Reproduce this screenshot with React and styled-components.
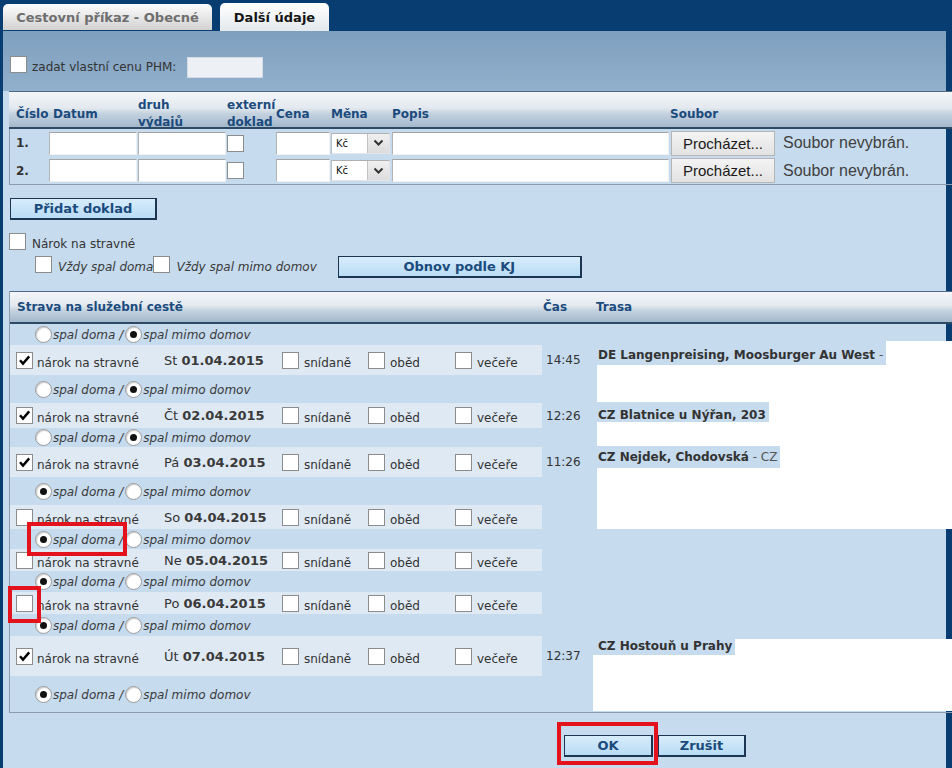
import React from 'react';
import styled, { createGlobalStyle } from 'styled-components';

const GlobalStyle = createGlobalStyle`
  html, body { margin: 0; padding: 0; background: #073d70; }
  body {
    font-family: "DejaVu Sans", Verdana, sans-serif;
    font-size: 12px;
    color: #333;
  }
`;

const DOC_COLS = '39px 89px 89px 49px 55px 61px 279px 1fr';
const MEAL_COLS = '532px 55px 1fr';

const Page = styled.div`
  width: 952px;
  height: 768px;
  overflow: hidden;
  background: #073d70;
  display: flex;
  flex-direction: column;
`;

const TabBar = styled.div`
  display: flex;
  align-items: flex-end;
  gap: 8px;
  height: 31px;
  padding-left: 3px;
  box-sizing: border-box;
  flex: none;
`;

const Tab = styled.div`
  box-sizing: border-box;
  width: ${p => p.$w}px;
  height: ${p => (p.$active ? 28 : 26)}px;
  margin-bottom: ${p => (p.$active ? 0 : 1)}px;
  border-radius: 5px 5px 0 0;
  display: flex;
  align-items: center;
  justify-content: center;
  font-weight: bold;
  font-size: 13px;
  color: ${p => (p.$active ? '#151515' : '#6e6e6e')};
  background: ${p =>
    p.$active
      ? 'linear-gradient(#ffffff, #e4e9ed)'
      : 'linear-gradient(#fdfdfd, #d2d2d2)'};
`;

const Panel = styled.div`
  width: 943px;
  margin-left: 3px;
  flex: 1;
  background: #c6dbee;
  display: flex;
  flex-direction: column;
`;

const TopArea = styled.div`
  height: 60px;
  box-sizing: border-box;
  padding: 25px 0 0 7px;
  background: linear-gradient(#7e9fbe, #91b0cc);
  display: flex;
  align-items: flex-start;
`;

const Label = styled.span`
  line-height: 13px;
  margin-bottom: -1px;
  white-space: nowrap;
  font-style: ${p => (p.$italic ? 'italic' : 'normal')};
  color: ${p => (p.$italic ? '#3a3a3a' : '#333')};
`;

const CheckLabel = styled.span`
  display: inline-flex;
  align-items: flex-end;
  gap: ${p => p.$gap ?? 5}px;
`;

const PhmInput = styled.span`
  width: 76px;
  height: 21px;
  margin: 1px 0 0 11px;
  box-sizing: border-box;
  background: #edf1f5;
  border: 1px solid #d3dce5;
`;

const Box = styled.span`
  box-sizing: border-box;
  width: 17px;
  height: 17px;
  flex: none;
  background: #fff;
  border: 1px solid #8c8c8c;
  display: inline-flex;
  align-items: center;
  justify-content: center;
`;

const RadioDot = styled.span`
  box-sizing: border-box;
  width: 17px;
  height: 17px;
  flex: none;
  border-radius: 50%;
  background: #fff;
  border: 1px solid #9a9a9a;
  box-shadow: inset 1px 1px 1px rgba(0, 0, 0, 0.2);
  display: inline-flex;
  align-items: center;
  justify-content: center;
  &::after {
    content: '';
    width: 7px;
    height: 7px;
    border-radius: 50%;
    background: ${p => (p.$on ? '#111' : 'transparent')};
  }
`;

const Marked = styled.span`
  position: relative;
  display: inline-flex;
  align-items: flex-end;
  &::after {
    content: '';
    position: absolute;
    z-index: 2;
    top: ${p => p.$t}px;
    right: ${p => p.$r}px;
    bottom: ${p => p.$b}px;
    left: ${p => p.$l}px;
    border: 4px solid #e3121c;
    pointer-events: none;
  }
`;

const Check = ({ on }) => (
  <Box>
    {on && (
      <svg width="13" height="13" viewBox="0 0 13 13">
        <path d="M2 6.3 L5 9.6 L11.2 2.4" fill="none" stroke="#000" strokeWidth="2.4" />
      </svg>
    )}
  </Box>
);

/* tabulka dokladu */

const DocTable = styled.div`
  margin: 0 -6px 0 6px;
`;

const HeadRow = styled.div`
  box-sizing: border-box;
  display: grid;
  grid-template-columns: ${p => p.$cols};
  height: ${p => p.$h}px;
  padding: ${p => p.$pt ?? 0}px 0 0 1px;
  align-items: center;
  border-top: 1px solid #4d6985;
  border-bottom: 2px solid #2e4964;
  background: linear-gradient(#f4f6f9 0%, #e3e9ef 45%, #c4d2df 62%, #a3b8cc 100%);
`;

const HeadCell = styled.div`
  font-weight: bold;
  color: #1b4b7d;
  line-height: 17px;
  padding-left: ${p => p.$pad ?? 0}px;
  margin-left: ${p => p.$shift ?? 0}px;
  white-space: nowrap;
`;

const DocRows = styled.div`
  border-left: 1px solid #8c9bab;
  border-bottom: 1px solid #8c9bab;
`;

const DocRow = styled.div`
  display: grid;
  grid-template-columns: ${DOC_COLS};
  height: ${p => p.$h}px;
  align-items: center;
`;

const RowNo = styled.div`
  font-weight: bold;
  padding-left: 6px;
  color: #333;
`;

const TextInput = styled.span`
  display: block;
  width: ${p => p.$w}px;
  height: 23px;
  box-sizing: border-box;
  background: #fff;
  border: 1px solid;
  border-color: #a4a4a4 #f0f0f0 #f0f0f0 #b4b4b4;
`;

const Select = styled.span`
  width: 59px;
  height: 21px;
  box-sizing: border-box;
  background: #fff;
  border: 1px solid;
  border-color: #b0b0b0 #e6e6e6 #e6e6e6 #bcbcbc;
  display: flex;
  align-items: center;
  justify-content: space-between;
  padding-left: 4px;
  font-size: 10px;
  color: #111;
`;

const DropBtn = styled.span`
  width: 22px;
  height: 19px;
  box-sizing: border-box;
  background: linear-gradient(#f0f0f0, #dcdcdc);
  border-left: 1px solid #c2c2c2;
  display: flex;
  align-items: center;
  justify-content: center;
`;

const FileCell = styled.div`
  display: flex;
  align-items: center;
`;

const Browse = styled.span`
  width: 104px;
  height: 25px;
  box-sizing: border-box;
  background: linear-gradient(#f4f4f4, #e2e2e2);
  border: 1px solid #b5b5b5;
  display: flex;
  align-items: center;
  justify-content: center;
  font-family: "Liberation Sans", Arial, sans-serif;
  font-size: 15px;
  color: #1a1a1a;
`;

const FileText = styled.span`
  margin-left: 8px;
  font-family: "Liberation Sans", Arial, sans-serif;
  font-size: 16px;
  color: #404040;
  white-space: nowrap;
`;

const BlueButton = styled.span`
  box-sizing: border-box;
  width: ${p => p.$w}px;
  height: 22px;
  display: flex;
  align-items: center;
  justify-content: center;
  border: 1px solid #1c3550;
  border-right-width: 2px;
  border-bottom-width: 2px;
  background: linear-gradient(#d7ecfb, #b9dcf5);
  font-weight: bold;
  font-size: 13px;
  color: #1b4b7d;
`;

const AddRow = styled.div`
  margin: 13px 0 0 7px;
  display: flex;
`;

const NarokRow = styled.div`
  margin-top: 12px;
  height: 18px;
  padding-left: 6px;
  display: flex;
  align-items: flex-end;
`;

const SpalRow = styled.div`
  margin-top: 6px;
  height: 22px;
  padding-left: 32px;
  display: flex;
  align-items: flex-start;
`;

const SpalOpts = styled.span`
  display: inline-flex;
  align-items: flex-end;
  height: 17px;
  margin-right: 21px;
`;

/* strava */

const MealTable = styled.div`
  margin: 13px -6px 0 6px;
  border-left: 1px solid #8c9bab;
  border-bottom: 1px solid #8c9bab;
`;

const RadioLine = styled.div`
  height: ${p => p.$h}px;
  padding-left: 25px;
  display: flex;
  align-items: center;
  grid-row: 2;
  grid-column: 1 / span 2;
`;

const RadioPair = styled.span`
  display: inline-flex;
  align-items: flex-end;
`;

const RadioText = styled.span`
  font-style: italic;
  color: #3a3a3a;
  line-height: 13px;
  margin: 0 ${p => p.$mr ?? 0}px 1px 1px;
  white-space: nowrap;
`;

const DayGrid = styled.div`
  display: grid;
  grid-template-columns: ${MEAL_COLS};
  grid-template-rows: ${p => p.$meal}px ${p => p.$radio}px;
`;

const MealBand = styled.div`
  grid-row: 1;
  grid-column: 1;
  background: #dfe9f3;
  display: grid;
  grid-template-columns: 150px 118px 86px 87px 1fr;
  align-items: center;
`;

const BandCell = styled.div`
  padding-left: ${p => p.$pad}px;
  display: flex;
  align-items: center;
  white-space: nowrap;
`;

const DateText = styled.span`
  font-size: 13px;
  color: #333;
  b { color: #3a3a3a; }
`;

const TimeCell = styled.div`
  grid-row: 1;
  grid-column: 2;
  padding-left: 4px;
  display: flex;
  align-items: center;
  color: #333;
`;

const TrasaCell = styled.div`
  grid-row: 1 / span 2;
  grid-column: 3;
  align-self: start;
  margin-top: ${p => p.$top}px;
  margin-left: ${p => -p.$shift}px;
  height: ${p => p.$h}px;
  background: #fff;
`;

const TrasaLine = styled.span`
  display: inline-block;
  background: #c6dbee;
  line-height: 14px;
  padding: ${p => p.$pt}px 3px ${p => p.$pb}px ${p => 1 + p.$shift}px;
  font-weight: bold;
  color: #333;
  white-space: nowrap;
  span { font-weight: normal; color: #555; }
`;

const Footer = styled.div`
  padding: 22px 0 0 561px;
  display: flex;
  gap: 5px;
`;

const days = [
  { dow: 'St', date: '01.04.2015', on: true, time: '14:45', meal: 30, radio: 28, home: false,
    trasa: { bold: 'DE Langenpreising, Moosburger Au West', rest: ' -', top: -4, h: 61, pt: 7, pb: 3, shift: 0 } },
  { dow: 'Čt', date: '02.04.2015', on: true, time: '12:26', meal: 25, radio: 19, home: false,
    trasa: { bold: 'CZ Blatnice u Nýřan, 203', top: -1, h: 45, pt: 6, pb: 0, shift: 0 } },
  { dow: 'Pá', date: '03.04.2015', on: true, time: '11:26', meal: 30, radio: 28, home: true,
    trasa: { bold: 'CZ Nejdek, Chodovská', rest: ' - CZ', top: -1, h: 83, pt: 4, pb: 4, shift: 0 } },
  { dow: 'So', date: '04.04.2015', on: false, meal: 24, radio: 20, home: true, markRadio: true },
  { dow: 'Ne', date: '05.04.2015', on: false, meal: 22, radio: 21, home: true },
  { dow: 'Po', date: '06.04.2015', on: false, meal: 22, radio: 22, home: true, markCheck: true },
  { dow: 'Út', date: '07.04.2015', on: true, time: '12:37', meal: 40, radio: 36, home: true,
    trasa: { bold: 'CZ Hostouň u Prahy', top: 3, h: 72, pt: 0, pb: 2, shift: 4 } },
];

const Chevron = () => (
  <svg width="11" height="8" viewBox="0 0 11 8">
    <path d="M1.5 1.5 L5.5 5.5 L9.5 1.5" fill="none" stroke="#333" strokeWidth="2" />
  </svg>
);

const SpalRadios = ({ home, mark }) => {
  const first = (
    <RadioPair>
      <RadioDot $on={home} />
      <RadioText $mr={2}>spal doma /</RadioText>
    </RadioPair>
  );
  return (
    <>
      {mark ? (
        <Marked $t={-9} $r={-2} $b={-8} $l={-8}>{first}</Marked>
      ) : (
        first
      )}
      <RadioPair>
        <RadioDot $on={!home} />
        <RadioText>spal mimo domov</RadioText>
      </RadioPair>
    </>
  );
};

const MealCheck = ({ label }) => (
  <CheckLabel>
    <Check />
    <Label>{label}</Label>
  </CheckLabel>
);

const DocLine = ({ no, h }) => (
  <DocRow $h={h}>
    <RowNo>{no}</RowNo>
    <TextInput $w={88} />
    <TextInput $w={88} />
    <Box />
    <TextInput $w={54} />
    <Select>
      Kč
      <DropBtn><Chevron /></DropBtn>
    </Select>
    <TextInput $w={277} />
    <FileCell>
      <Browse>Procházet...</Browse>
      <FileText>Soubor nevybrán.</FileText>
    </FileCell>
  </DocRow>
);

const Day = ({ d }) => (
  <DayGrid $meal={d.meal} $radio={d.radio}>
    <MealBand>
      <BandCell $pad={6}>
        <CheckLabel $gap={4}>
          {d.markCheck ? (
            <Marked $t={-9} $r={-8} $b={-11} $l={-8}><Check on={d.on} /></Marked>
          ) : (
            <Check on={d.on} />
          )}
          <Label>nárok na stravné</Label>
        </CheckLabel>
      </BandCell>
      <BandCell $pad={4}>
        <DateText>{d.dow} <b>{d.date}</b></DateText>
      </BandCell>
      <BandCell $pad={4}><MealCheck label="snídaně" /></BandCell>
      <BandCell $pad={4}><MealCheck label="oběd" /></BandCell>
      <BandCell $pad={4}><MealCheck label="večeře" /></BandCell>
    </MealBand>
    {d.time && <TimeCell>{d.time}</TimeCell>}
    {d.trasa && (
      <TrasaCell $top={d.trasa.top} $h={d.trasa.h} $shift={d.trasa.shift}>
        <TrasaLine $pt={d.trasa.pt} $pb={d.trasa.pb} $shift={d.trasa.shift}>
          {d.trasa.bold}
          {d.trasa.rest && <span>{d.trasa.rest}</span>}
        </TrasaLine>
      </TrasaCell>
    )}
    <RadioLine $h={d.radio}>
      <SpalRadios home={d.home} mark={d.markRadio} />
    </RadioLine>
  </DayGrid>
);

export default function App() {
  return (
    <Page>
      <GlobalStyle />
      <TabBar>
        <Tab $w={209}>Cestovní příkaz - Obecné</Tab>
        <Tab $w={109} $active>Další údaje</Tab>
      </TabBar>
      <Panel>
        <TopArea>
          <CheckLabel>
            <Box />
            <Label>zadat vlastní cenu PHM:</Label>
          </CheckLabel>
          <PhmInput />
        </TopArea>

        <DocTable>
          <HeadRow $cols={DOC_COLS} $h={38} $pt={5}>
            <HeadCell $pad={6}>Číslo</HeadCell>
            <HeadCell $pad={4}>Datum</HeadCell>
            <HeadCell>druh<br />výdajů</HeadCell>
            <HeadCell>externí<br />doklad</HeadCell>
            <HeadCell>Cena</HeadCell>
            <HeadCell>Měna</HeadCell>
            <HeadCell>Popis</HeadCell>
            <HeadCell $shift={-1}>Soubor</HeadCell>
          </HeadRow>
          <DocRows>
            <DocLine no="1." h={28} />
            <DocLine no="2." h={27} />
          </DocRows>
        </DocTable>

        <AddRow>
          <BlueButton $w={147}>Přidat doklad</BlueButton>
        </AddRow>

        <NarokRow>
          <CheckLabel $gap={6}>
            <Box />
            <Label>Nárok na stravné</Label>
          </CheckLabel>
        </NarokRow>

        <SpalRow>
          <SpalOpts>
            <CheckLabel $gap={6}>
              <Box />
              <Label $italic>Vždy spal doma</Label>
            </CheckLabel>
            <CheckLabel $gap={6}>
              <Box />
              <Label $italic>Vždy spal mimo domov</Label>
            </CheckLabel>
          </SpalOpts>
          <BlueButton $w={244}>Obnov podle KJ</BlueButton>
        </SpalRow>

        <MealTable>
          <HeadRow $cols={MEAL_COLS} $h={33}>
            <HeadCell $pad={6}>Strava na služební cestě</HeadCell>
            <HeadCell>Čas</HeadCell>
            <HeadCell $shift={-2}>Trasa</HeadCell>
          </HeadRow>
          <RadioLine $h={21}>
            <SpalRadios home={false} />
          </RadioLine>
          {days.map(d => (
            <Day key={d.date} d={d} />
          ))}
        </MealTable>

        <Footer>
          <Marked $t={-13} $r={-5} $b={-8} $l={-7}>
            <BlueButton $w={89}>OK</BlueButton>
          </Marked>
          <BlueButton $w={88}>Zrušit</BlueButton>
        </Footer>
      </Panel>
    </Page>
  );
}
